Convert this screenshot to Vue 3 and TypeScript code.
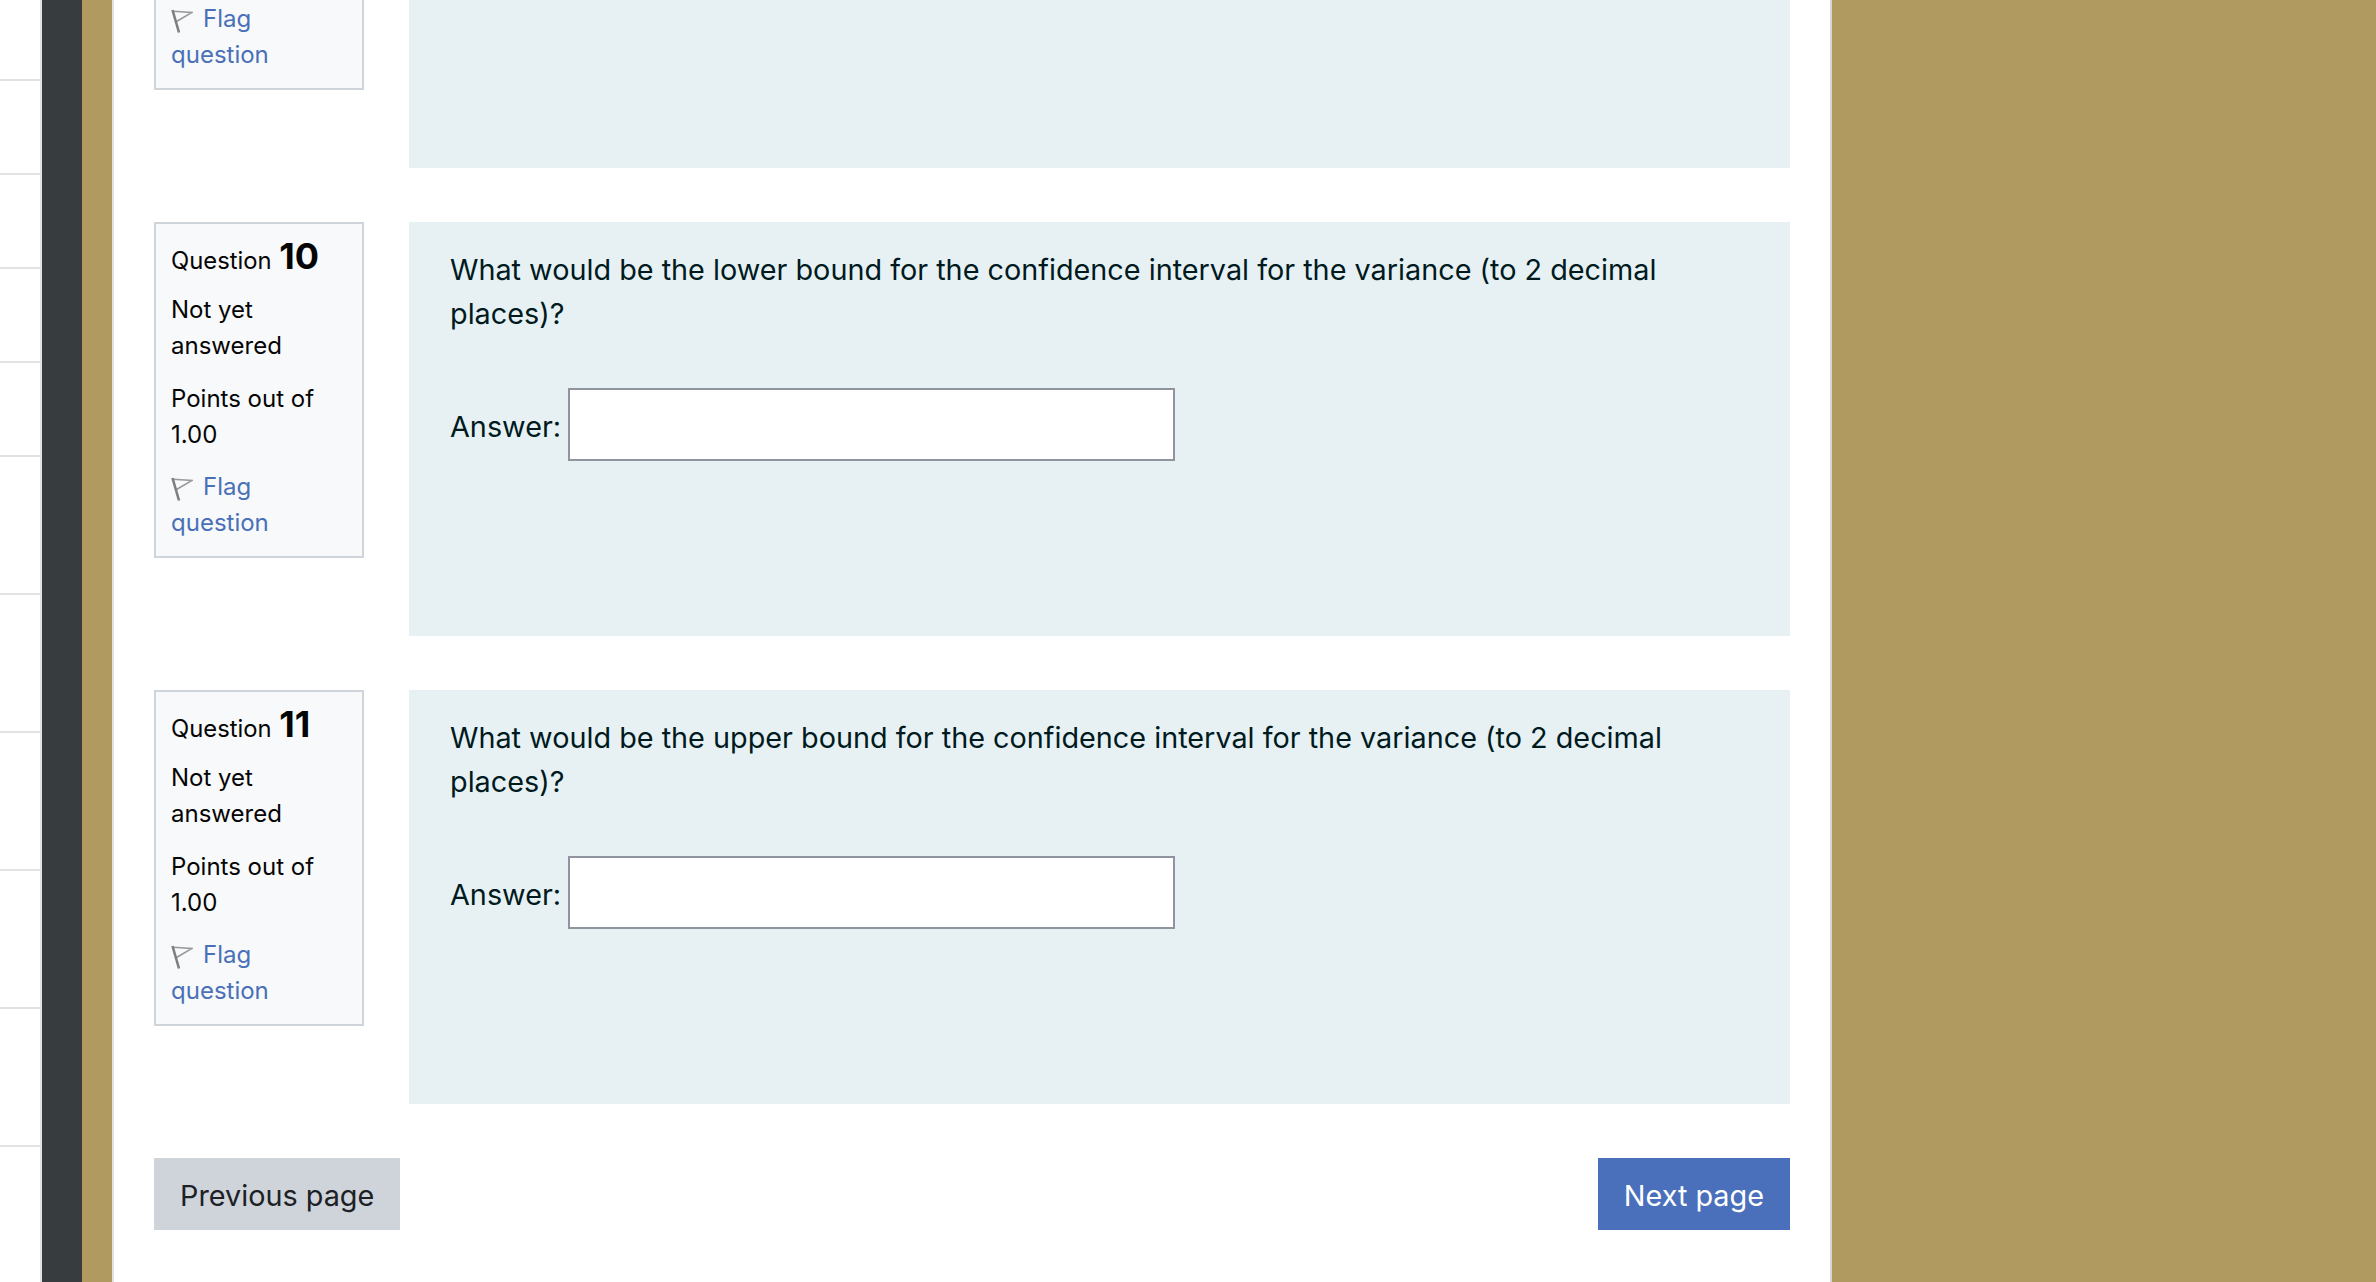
<script setup lang="ts">
interface Question {
  num: number
  text: string
}

const navRows: number[] = [81, 94, 94, 94, 94, 138, 138, 138, 138, 138, 135]

const questions: Question[] = [
  { num: 9, text: '' },
  {
    num: 10,
    text: 'What would be the lower bound for the confidence interval for the variance (to 2 decimal places)?'
  },
  {
    num: 11,
    text: 'What would be the upper bound for the confidence interval for the variance (to 2 decimal places)?'
  }
]
</script>

<template>
  <div class="page">
    <aside class="drawer">
      <div v-for="(h, i) in navRows" :key="i" class="nav-row" :style="{ height: h + 'px' }"></div>
    </aside>
    <div class="strip"></div>
    <div class="gold-gap"></div>
    <main class="main">
      <div class="questions">
        <section v-for="q in questions" :key="q.num" class="question">
          <div class="info">
            <h3 class="qno"><span class="qlabel">Question</span> <span class="num">{{ q.num }}</span></h3>
            <div class="state">Not yet answered</div>
            <div class="grade">Points out of 1.00</div>
            <div class="flag">
              <a class="flag-link">
                <svg class="flag-icon" width="22" height="24" viewBox="0 0 22 24">
                  <path d="M2 2.2 L21 3.5 L5.5 12.5" fill="none" stroke="#999" stroke-width="1.6" />
                  <path d="M1.5 1 L8 23.5" fill="none" stroke="#7f7f7f" stroke-width="2.6" />
                </svg>Flag question</a>
            </div>
          </div>
          <div class="content">
            <template v-if="q.text">
              <p class="qtext">{{ q.text }}</p>
              <div class="answer">
                <label class="answer-label">Answer:</label>
                <input class="answer-input" type="text" />
              </div>
            </template>
          </div>
        </section>
      </div>
      <div class="actions">
        <button class="btn btn-prev" type="button">Previous page</button>
        <button class="btn btn-next" type="button">Next page</button>
      </div>
    </main>
  </div>
</template>

<style>
html,
body {
  margin: 0;
  background: #b09a60;
  overflow: hidden;
}
</style>

<style scoped>
.page {
  display: flex;
  height: 1282px;
  overflow: hidden;
  font-family: Inter, "Liberation Sans", sans-serif;
  color: #001a1e;
  background: #b09a60;
}
.drawer {
  width: 40px;
  background: #fff;
  border-right: 2px solid #e2e2e2;
  flex: none;
}
.nav-row {
  box-sizing: border-box;
  border-bottom: 2px solid #e2e2e2;
}
.nav-row:last-child {
  border-bottom: none;
}
.strip {
  width: 40px;
  flex: none;
  background: #373c3f;
}
.gold-gap {
  width: 30px;
  flex: none;
  background: #b09a60;
}
.main {
  box-sizing: border-box;
  width: 1720px;
  flex: none;
  background: #fff;
  border-left: 2px solid #e2e2e2;
  border-right: 2px solid #d6d6d6;
  padding: 0 40px;
}
.questions {
  margin-top: -246px;
}
.question {
  display: flex;
  align-items: flex-start;
  margin-bottom: 54px;
}
.info {
  box-sizing: border-box;
  width: 210px;
  height: 336px;
  flex: none;
  margin-right: 45px;
  padding: 11px 15px;
  background: #f8f9fa;
  border: 2px solid #ced4da;
  font-size: 24px;
  line-height: 36px;
  color: #050505;
}
.qno {
  margin: 0 0 10px;
  font-size: 24px;
  font-weight: 400;
  line-height: 43px;
}
.qlabel {
  font-size: 23.8px;
}
.num {
  font-size: 36px;
  font-weight: 700;
  margin-left: 1px;
}
.state {
  margin-bottom: 17px;
}
.grade {
  margin-bottom: 16px;
}
.flag-link {
  color: #4a70b8;
}
.flag-icon {
  margin-right: 10px;
  vertical-align: -6px;
}
.content {
  box-sizing: border-box;
  flex: 1;
  height: 414px;
  padding: 26px 41px;
  background: #e7f1f4;
  font-size: 28.8px;
  line-height: 44px;
}
.qtext {
  margin: 0 0 52px;
}
.answer {
  display: flex;
  align-items: center;
}
.answer-label {
  margin-right: 7px;
  padding-top: 5px;
}
.answer-input {
  box-sizing: border-box;
  width: 607px;
  height: 73px;
  background: #fff;
  border: 2px solid #8f959e;
  border-radius: 0;
  outline: none;
}
.actions {
  display: flex;
  justify-content: space-between;
}
.btn {
  height: 72px;
  padding: 2px 26px 0;
  border: none;
  border-radius: 0;
  font-family: inherit;
  font-size: 28.8px;
}
.btn-prev {
  background: #ced4da;
  color: #1d2125;
}
.btn-next {
  background: #4a70bb;
  color: #fff;
}
</style>
